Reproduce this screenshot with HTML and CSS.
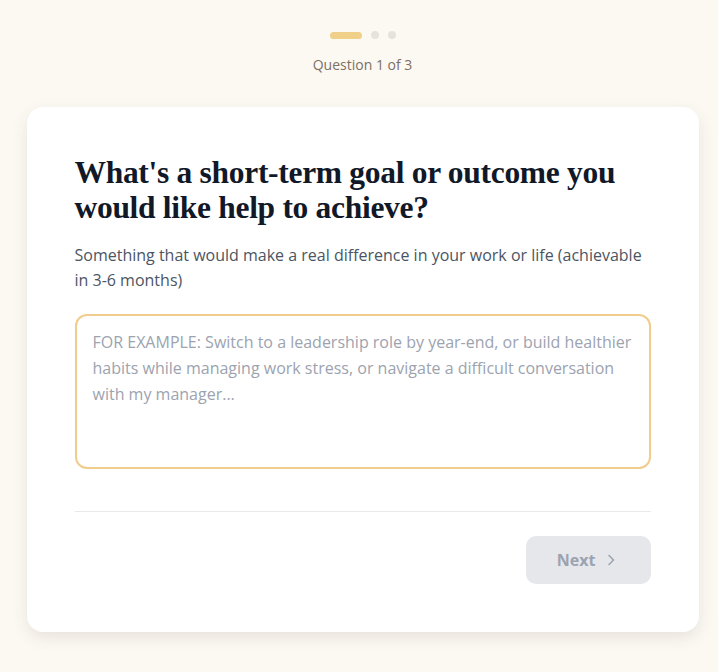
FILE: index.html
```html
<!DOCTYPE html>
<html lang="en">
<head>
    <meta charset="UTF-8">
    <title>Goal Setup</title>
    <meta name="viewport" content="width=device-width, initial-scale=1.0">
    <link rel="stylesheet" href="styles.css">
</head>
<body>

    <div class="progress">
        <div class="steps">
            <span class="step active"></span>
            <span class="step"></span>
            <span class="step"></span>
        </div>
        <p class="step-label">Question 1 of 3</p>
    </div>

    <div class="question-card">
        <h1>What's a short-term goal or outcome you would like help to achieve?</h1>
        <p class="hint">Something that would make a real difference in your work or life (achievable in 3-6 months)</p>

        <textarea class="answer" autofocus placeholder="FOR EXAMPLE: Switch to a leadership role by year-end, or build healthier habits while managing work stress, or navigate a difficult conversation with my manager..."></textarea>

        <div class="card-footer">
            <button class="next-button" disabled>
                Next
                <svg width="16" height="16" viewBox="0 0 16 16" fill="none" stroke="currentColor" stroke-width="1.5" stroke-linecap="round" stroke-linejoin="round"><path d="M6 3.5l4.5 4.5L6 12.5"/></svg>
            </button>
        </div>
    </div>

</body>
</html>
```

FILE: styles.css
```css
body {
    font-family: 'Open Sans', sans-serif;
    margin: 0;
    padding: 31px 16px 40px 23px;
    background-color: #fcf9f3;
    color: #111827;
}

.progress {
    text-align: center;
    margin-bottom: 33px;
}

.steps {
    display: flex;
    justify-content: center;
    align-items: center;
    gap: 9px;
    height: 8px;
}

.step {
    width: 8px;
    height: 8px;
    border-radius: 50%;
    background-color: #e6e3df;
}

.step.active {
    width: 32px;
    height: 7px;
    border-radius: 4px;
    background-color: #f0cf88;
}

.step-label {
    margin: 16px 0 0;
    font-size: 14px;
    color: #7c6f64;
}

.question-card {
    max-width: 576px;
    margin: 0 auto;
    background: white;
    padding: 48px;
    border-radius: 16px;
    box-shadow: 0 6px 16px rgba(60, 50, 30, 0.10);
}

h1 {
    font-family: 'Liberation Serif', serif;
    font-size: 31.5px;
    line-height: 35px;
    font-weight: bold;
    color: #111827;
    margin: 0 0 18px;
    letter-spacing: -0.3px;
}

.hint {
    font-size: 16px;
    line-height: 25px;
    color: #4b5563;
    margin: 0 0 21px;
}

.answer {
    display: block;
    width: 100%;
    height: 155px;
    box-sizing: border-box;
    padding: 13px 16px;
    border: 2px solid #f0cd8c;
    border-radius: 12px;
    font-family: 'Open Sans', sans-serif;
    font-size: 16px;
    line-height: 26px;
    color: #111827;
    resize: none;
    outline: none;
}

.answer::placeholder {
    color: #9ca3af;
}

.card-footer {
    margin-top: 42px;
    padding-top: 24px;
    border-top: 1px solid #e9e9ea;
    display: flex;
    justify-content: flex-end;
}

.next-button {
    display: flex;
    align-items: center;
    gap: 8px;
    width: 125px;
    height: 48px;
    justify-content: center;
    background-color: #e5e7eb;
    color: #9ca3af;
    border: none;
    border-radius: 10px;
    font-family: 'Open Sans', sans-serif;
    font-size: 16px;
    font-weight: bold;
    cursor: not-allowed;
}
```
